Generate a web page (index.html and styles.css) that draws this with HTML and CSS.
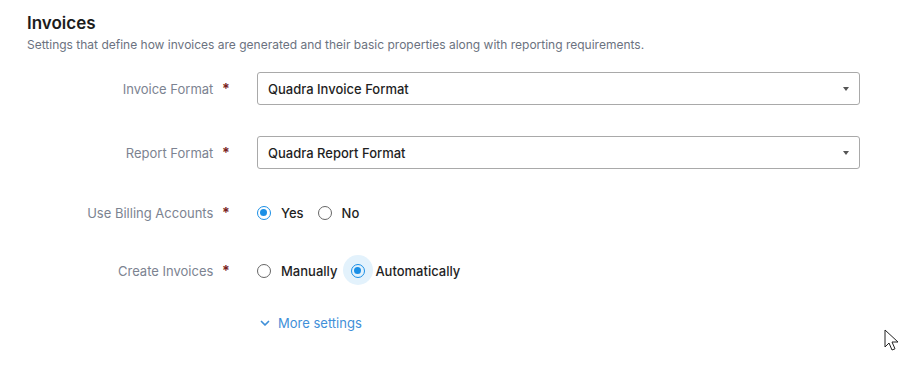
FILE: index.html
```html
<!DOCTYPE html>
<html lang="en">
<head>
    <meta charset="UTF-8">
    <title>Invoices</title>
    <link rel="stylesheet" href="styles.css">
</head>
<body>
    <div class="page">
        <h1 class="title">Invoices</h1>
        <p class="desc">Settings that define how invoices are generated and their basic properties along with reporting requirements.</p>

        <div class="form">
            <!-- select rows -->
            <div class="row r1">
                <div class="lbl">Invoice Format <span class="req">*</span></div>
                <div class="ctrl">
                    <div class="select">
                        <span>Quadra Invoice Format</span>
                        <i class="caret"></i>
                    </div>
                </div>
            </div>
            <div class="row r2">
                <div class="lbl">Report Format <span class="req">*</span></div>
                <div class="ctrl">
                    <div class="select">
                        <span>Quadra Report Format</span>
                        <i class="caret"></i>
                    </div>
                </div>
            </div>

            <!-- radio rows -->
            <div class="row r3">
                <div class="lbl">Use Billing Accounts <span class="req">*</span></div>
                <div class="ctrl radios">
                    <label class="opt"><span class="dot on"></span>Yes</label>
                    <label class="opt"><span class="dot"></span>No</label>
                </div>
            </div>
            <div class="row r4">
                <div class="lbl">Create Invoices <span class="req">*</span></div>
                <div class="ctrl radios">
                    <label class="opt"><span class="dot"></span>Manually</label>
                    <label class="opt"><span class="dot on focus"></span>Automatically</label>
                </div>
            </div>

            <div class="row r5">
                <div class="lbl"></div>
                <div class="ctrl">
                    <a class="more" href="#">
                        <svg width="10" height="7" viewBox="0 0 10 7"><path d="M1.5 1.5 L5 5 L8.5 1.5" fill="none" stroke="#3f8fd8" stroke-width="1.7" stroke-linecap="round" stroke-linejoin="round"/></svg>
                        More settings
                    </a>
                </div>
            </div>
        </div>
    </div>

    <!-- mouse pointer -->
    <svg class="cursor" width="16" height="24" viewBox="0 0 16 24">
        <path d="M1 1 L1 18 L5 14 L8 21 L11 19.8 L8 13 L14 13 Z" fill="#fff" stroke="#222" stroke-width="1" stroke-linejoin="round"/>
    </svg>
</body>
</html>
```

FILE: styles.css
```css
body{
    margin: 0;
    font-family: Inter, "Noto Sans", sans-serif;
    background: #fff;
    color: #222;
}

.page{
    padding: 12px 0 0 27px;
}

.title{
    margin: 0;
    font-size: 17px;
    line-height: 22px;
    font-weight: 600;
    color: #1c1c1c;
}

.desc{
    margin: 3px 0 0;
    font-size: 12px;
    line-height: 15px;
    color: #6b7280;
}

.form{
    padding-top: 20px;
    width: 833px;
}

.row{
    display: flex;
    align-items: center;
    height: 33px;
}
.r2{ margin-top: 31px; }
.r3{ margin-top: 27px; }
.r4{ margin-top: 25px; }
.r5{ margin-top: 21px; height: 30px; }

/* label column */
.lbl{
    width: 203px;
    flex-shrink: 0;
    text-align: right;
    font-size: 13px;
    color: #7c8391;
    white-space: nowrap;
}

.req{
    display: inline-block;
    margin-left: 5px;
    width: 8px;
    text-align: left;
    font-size: 14px;
    color: #7a1f1f;
    font-weight: 700;
}

.ctrl{
    flex: 1;
    margin-left: 27px;
    display: flex;
    align-items: center;
}

/* select box */
.select{
    flex: 1;
    height: 33px;
    box-sizing: border-box;
    border: 1px solid #a9a9a9;
    border-radius: 3px;
    display: flex;
    align-items: center;
    justify-content: space-between;
    padding: 0 10px 0 10px;
    font-size: 13px;
    font-weight: 500;
    color: #1f1f1f;
}

.caret{
    width: 0;
    height: 0;
    border-left: 3.5px solid transparent;
    border-right: 3.5px solid transparent;
    border-top: 4px solid #555;
    margin-top: 1px;
}

/* radios */
.opt{
    display: flex;
    align-items: center;
    font-size: 13px;
    font-weight: 500;
    color: #1f1f1f;
    margin-right: 14px;
}

.dot{
    position: relative;
    width: 14px;
    height: 14px;
    box-sizing: border-box;
    border: 1.6px solid #666;
    border-radius: 50%;
    margin-right: 10px;
}

.dot.on{
    border-color: #1a8fe6;
}
.dot.on::after{
    content: "";
    position: absolute;
    top: 2px;
    left: 2px;
    width: 7px;
    height: 7px;
    border-radius: 50%;
    background: #1a8fe6;
}

/* focus halo */
.dot.focus::before{
    content: "";
    position: absolute;
    top: -9.5px;
    left: -9.5px;
    width: 30px;
    height: 30px;
    border-radius: 50%;
    background: #e3f2fc;
    z-index: -1;
}

/* more settings link */
.more{
    display: flex;
    align-items: center;
    gap: 8px;
    margin-left: 3px;
    font-size: 13px;
    color: #3f8fd8;
    text-decoration: none;
}

.cursor{
    position: absolute;
    left: 884px;
    top: 329px;
}
```
